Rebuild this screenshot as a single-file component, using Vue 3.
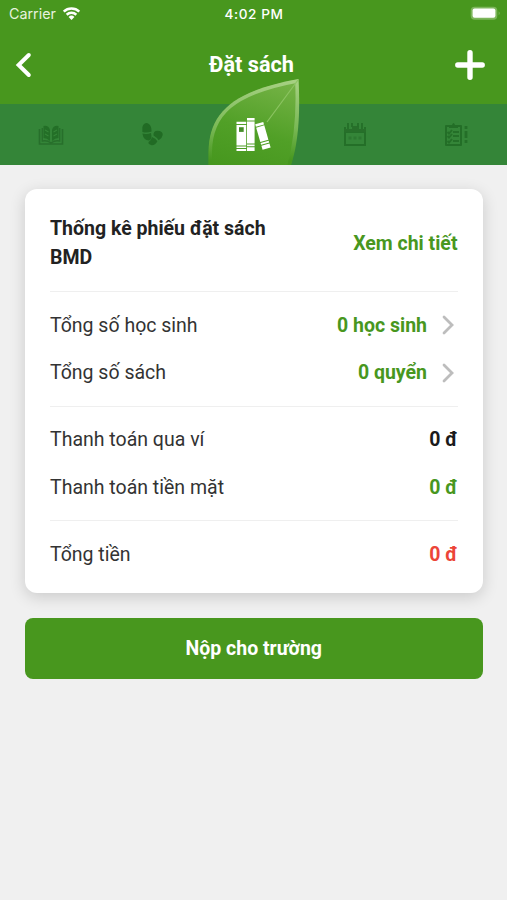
<template>
  <div class="screen">
    <header class="header">
      <div class="status-bar">
        <div class="carrier">
          <span>Carrier</span>
          <svg class="wifi" viewBox="0 0 20 15">
            <path d="M1.8 5.6a11.8 11.8 0 0 1 16.4 0" />
            <path d="M4.9 8.8a7.4 7.4 0 0 1 10.2 0" />
            <path class="wifi-dot" d="M10 14.3l-3.1-3.1a4.4 4.4 0 0 1 6.2 0z" />
          </svg>
        </div>
        <span class="time">4:02 PM</span>
        <svg class="battery" viewBox="0 0 31 15">
          <rect x="0.7" y="0.7" width="26.6" height="13" rx="4" fill="#7db65c" />
          <rect x="2.6" y="2.6" width="22.8" height="9.2" rx="2" fill="#fff" />
          <path d="M28.7 5.2q2 2 0 4z" fill="#7db65c" />
        </svg>
      </div>
      <div class="nav-bar">
        <button class="nav-btn" type="button">
          <svg width="18" height="26" viewBox="0 0 18 26">
            <path d="M14.8 3L4.6 13L14.8 23" fill="none" stroke="#fff" stroke-width="4" stroke-linecap="round" />
          </svg>
        </button>
        <h1 class="nav-title">Đặt sách</h1>
        <button class="nav-btn right" type="button">
          <svg width="30" height="30" viewBox="0 0 30 30">
            <path d="M15 2.8v24.4M2.8 15h24.4" stroke="#fff" stroke-width="5.4" stroke-linecap="round" />
          </svg>
        </button>
      </div>
    </header>

    <nav class="tabs">
      <button
        v-for="tab in tabs"
        :key="tab"
        :class="['tab', selected === tab ? 'active' : '']"
        type="button"
        @click="selected = tab"
      >
        <svg v-if="tab === 'read'" class="tab-icon" viewBox="0 0 26 26">
          <path d="M1.5 8v15h23V8" fill="none" stroke="#276f2b" stroke-width="1.6" />
          <path d="M4.3 7v13q5-1 8.7 2q3.700-3 8.700-2V7" fill="none" stroke="#276f2b" stroke-width="1.4" />
          <path d="M5.5 5q5-1 6.500 4v11q-3-3-6.500-3zM20.500 5q-5-1-6.500 4v11q3-3 6.500-3z" fill="#236f27" />
          <path d="M7 9l3.500 2M7 13l3.500 2M19 9l-3.500 2M19 13l-3.500 2" stroke="#358638" stroke-width="1.1" />
        </svg>
        <svg v-else-if="tab === 'steps'" class="tab-icon" viewBox="0 0 26 26">
          <path d="M3.4 11V6q1-4 4.6-4q4.600 1 4.600 8.500q-4.600 1.800-9.200.5z" fill="#216b24" />
          <path d="M3.4 12.600q4.600 1 8.600-.6q1.500 6.500-2 7.500q-5.500 0-6.600-6.900z" fill="#216b24" />
          <path d="M14.5 14.500q-.5-4.500 4-4.700q5.500.2 5.200 4.200q-.6 3.500-4 5.300q-2-3-5.200-4.800z" fill="#216b24" />
          <path d="M13 16q3.700 1.200 5.400 4.300q-2.200 4.200-5.800 4q-3.800-1-3-3.200q2.600-1.300 3.400-5.100z" fill="#216b24" />
        </svg>
        <svg v-else-if="tab === 'books'" class="books-icon" viewBox="0 0 36 36">
          <path d="M1.5 5.7h9.700v2.300H1.5zM1.5 9h9.700v20.500H1.5zM1.5 30.500h9.700v1.500H1.5zM1.5 33h9.700v2H1.5z" fill="#fff" />
          <path d="M12 2h7.600v2.500H12zM12 5.500h7.600v22H12zM12 28.500h7.600v1.700H12zM12 31.200h7.600v3.800H12z" fill="#fff" />
          <g fill="#fff" transform="translate(20.2 8.2) rotate(-16)">
            <path d="M0 0h8.400v2.600H0zM0 3.600h8.400v15H0zM0 19.600h8.400v1.900H0zM0 22.500h8.400v4.200H0z" />
          </g>
          <path d="M4 11.200h4.700v4.700H4z" fill="#458d29" />
        </svg>
        <svg v-else-if="tab === 'calendar'" class="tab-icon" viewBox="0 0 26 26">
          <path d="M3 6v18h20V6M3 11h20" fill="none" stroke="#246f28" stroke-width="2" />
          <path d="M2 8h22v3H2zM10 5h7v5h-7z" fill="#276f2a" />
          <path d="M6 2v6M20 2v6M10 2v4M16 2v4" stroke="#246f28" stroke-width="1.8" />
          <path d="M6.5 17h3M11.5 17h3M16.5 17h3" stroke="#2c7830" stroke-width="3" />
        </svg>
        <svg v-else class="tab-icon" viewBox="0 0 26 26">
          <path d="M7 5H3v19h15V5h-4" fill="none" stroke="#236e27" stroke-width="2" stroke-linejoin="round" />
          <path d="M6 4h3q1.5-4 3 0h3v3H6z" fill="#236e27" />
          <path d="M4.5 11l1.5 1.5L9 9M4.5 15l1.5 1.5L9 13M4.5 20l1.5 1.5L9 18M10 11h6M10 15h6M10 20h6" fill="none" stroke="#246f28" stroke-width="1.9" />
          <path d="M23 5v3M23 10v7M23 19v3" stroke="#246f28" stroke-width="2.8" />
        </svg>
        <svg v-if="selected === tab" class="leaf" viewBox="0 0 92 86">
          <defs>
            <linearGradient id="leaf-fill" x1="0.7" y1="0" x2="0.4" y2="1">
              <stop offset="0" stop-color="#74b245" />
              <stop offset="0.55" stop-color="#51a027" />
              <stop offset="1" stop-color="#46971e" />
            </linearGradient>
            <linearGradient id="leaf-edge" x1="0" y1="0" x2="0" y2="1">
              <stop offset="0" stop-color="#a8d184" />
              <stop offset="0.5" stop-color="#7bb957" />
              <stop offset="0.85" stop-color="#46971e" />
            </linearGradient>
            <clipPath id="leaf-shape">
              <path d="M0.5 86V73C1 34 24 12 90.5 0Q93.5 55 83 86z" />
            </clipPath>
          </defs>
          <g clip-path="url(#leaf-shape)">
            <path d="M0.5 96V73C1 34 24 12 90.5 0Q93.5 55 80 96z" fill="url(#leaf-fill)" stroke="url(#leaf-edge)" stroke-width="7" />
            <path d="M90 1L59 43" stroke="#8cc462" stroke-width="1.2" />
          </g>
        </svg>
      </button>
    </nav>

    <main class="content">
      <section class="card">
        <div class="card-head">
          <h2 class="card-title">Thống kê phiếu đặt sách BMD</h2>
          <a class="detail">Xem chi tiết</a>
        </div>
        <div v-for="(group, i) in groups" :key="i" class="group">
          <div v-for="row in group" :key="row.label" class="row">
            <span class="label">{{ row.label }}</span>
            <span :class="['value', row.color]">{{ row.value }}</span>
            <svg v-if="row.link" class="chevron" viewBox="0 0 12 20">
              <path d="M2 2l8 8l-8 8" />
            </svg>
          </div>
        </div>
      </section>
      <button class="submit" type="button">Nộp cho trường</button>
    </main>
  </div>
</template>

<script setup>
import { ref } from 'vue'

const tabs = ['read', 'steps', 'books', 'calendar', 'tasks']
const selected = ref('books')

const groups = [
  [
    { label: 'Tổng số học sinh', value: '0 học sinh', color: 'green', link: true },
    { label: 'Tổng số sách', value: '0 quyển', color: 'green', link: true },
  ],
  [
    { label: 'Thanh toán qua ví', value: '0 đ', color: 'black' },
    { label: 'Thanh toán tiền mặt', value: '0 đ', color: 'green' },
  ],
  [{ label: 'Tổng tiền', value: '0 đ', color: 'red' }],
]
</script>

<style>
body {
  background: #f0f0f0;
}
</style>

<style scoped>
.screen {
  min-height: 900px;
  background: #f0f0f0;
  font-family: Roboto, 'Liberation Sans', sans-serif;
  color: #222;
}

button {
  border: 0;
  padding: 0;
  background: none;
  font-family: inherit;
}

.header {
  height: 103.5px;
  background: #48971e;
  color: #fff;
}

.status-bar {
  display: grid;
  grid-template-columns: 1fr auto 1fr;
  align-items: center;
  height: 27px;
  padding: 0 6px 0 9px;
  font-family: Inter, sans-serif;
}

.carrier {
  display: flex;
  align-items: center;
  gap: 6px;
  font-size: 14.3px;
  color: #e7f2df;
}

.wifi {
  width: 19px;
  height: 15px;
  fill: none;
  stroke: #fff;
  stroke-width: 2.6;
}

.wifi-dot {
  fill: #fff;
  stroke: none;
}

.time {
  margin-right: 2px;
  font-size: 13.6px;
  font-weight: 500;
  letter-spacing: 0.6px;
}

.battery {
  justify-self: end;
  width: 31px;
  height: 15px;
}

.nav-bar {
  display: grid;
  grid-template-columns: 60px 1fr 60px;
  align-items: center;
  height: 76px;
  padding: 0 22px 0 14px;
}

.nav-btn {
  display: flex;
}

.nav-btn.right {
  justify-content: flex-end;
}

.nav-title {
  margin: 0;
  padding: 0 0 1px 4px;
  text-align: center;
  font-size: 21.7px;
  font-weight: 700;
}

.tabs {
  display: grid;
  grid-template-columns: repeat(5, 1fr);
  height: 61px;
  background: #348538;
}

.tab {
  position: relative;
  display: flex;
  align-items: center;
  justify-content: center;
  padding-bottom: 1px;
}

.tab-icon {
  width: 26px;
  height: 26px;
}

.books-icon {
  position: relative;
  z-index: 1;
  width: 36px;
  height: 36px;
}

.leaf {
  position: absolute;
  left: 5px;
  bottom: 0;
  width: 92px;
  height: 86px;
}

.content {
  padding: 24.5px 24.5px 0 25px;
}

.card {
  padding: 25px 25px 6px;
  border-radius: 12px;
  background: #fff;
  box-shadow: 0 4px 16px rgba(0, 0, 0, 0.16);
}

.card-head {
  display: flex;
  align-items: center;
  justify-content: space-between;
  padding-bottom: 19px;
}

.card-title {
  width: 240px;
  margin: 0;
  font-size: 19.5px;
  font-weight: 700;
  line-height: 29px;
}

.detail {
  font-size: 19.5px;
  font-weight: 700;
  color: #48971e;
}

.group {
  padding: 9.3px 0;
  border-top: 1.5px solid #efefef;
}

.row {
  display: flex;
  align-items: center;
  height: 47.5px;
  font-size: 19.5px;
}

.label {
  flex: 1;
  color: #333;
}

.value {
  font-weight: 700;
}

.green {
  color: #48971e;
}

.black {
  color: #1b1b1b;
}

.red {
  color: #ec4538;
}

.chevron {
  width: 12px;
  height: 20px;
  margin: 0 3.5px 0 15px;
  fill: none;
  stroke: #bdbdbd;
  stroke-width: 2.8;
  stroke-linecap: round;
}

.submit {
  display: block;
  width: 100%;
  height: 61px;
  margin-top: 24.5px;
  border-radius: 8px;
  background: #48971e;
  color: #fff;
  font-size: 19.5px;
  font-weight: 700;
}
</style>
